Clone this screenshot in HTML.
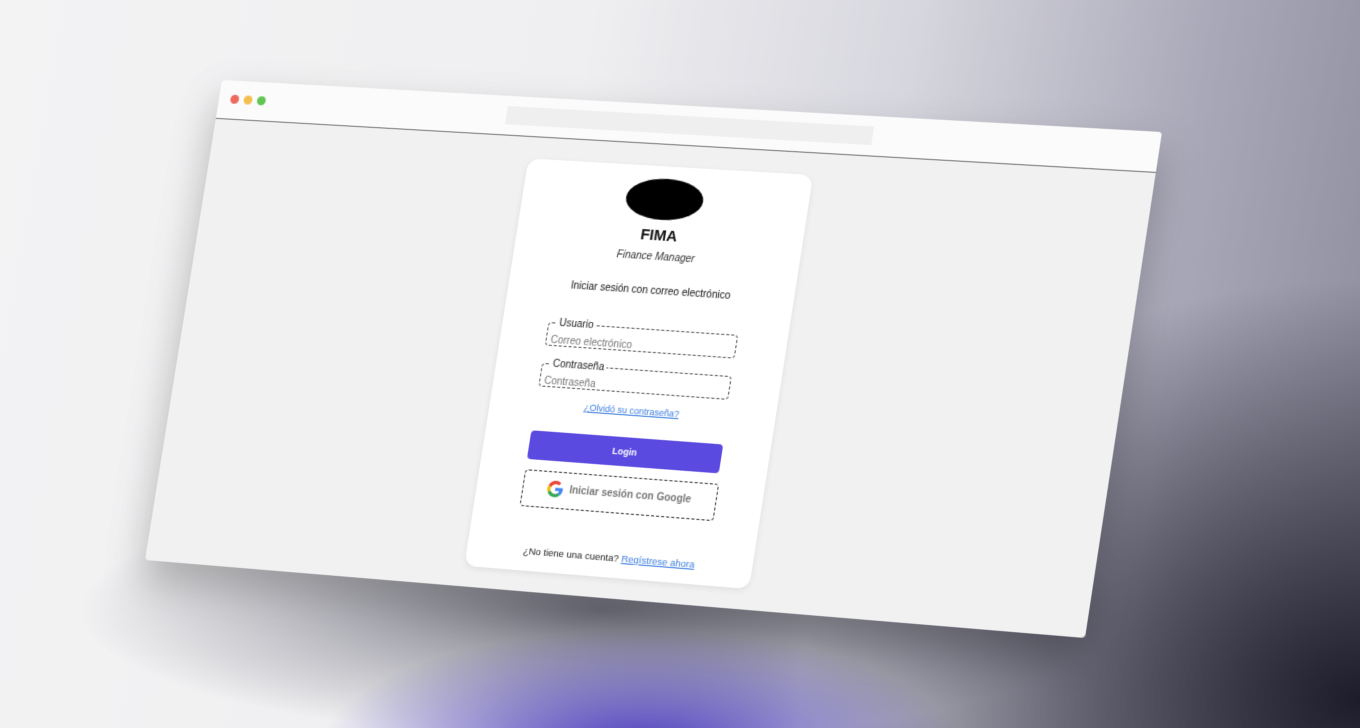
<!DOCTYPE html>
<html><head><meta charset="utf-8"><style>
html,body{margin:0;padding:0;width:1360px;height:728px;overflow:hidden;font-family:"Liberation Sans",sans-serif;}
body{background:
radial-gradient(ellipse 320px 120px at 640px 750px, rgba(72,56,190,1), rgba(72,56,190,0) 100%),
radial-gradient(ellipse 560px 420px at 1360px 700px, rgba(28,28,42,1), rgba(28,28,42,0) 100%),
radial-gradient(ellipse 520px 130px at 600px 610px, rgba(40,40,60,0.6), rgba(40,40,60,0) 100%),
linear-gradient(100deg,#f3f3f4 0%,#efeff1 40%,#d6d6de 62%,#a9a8b8 82%,#8a8a9a 100%);}
#win{position:absolute;left:0;top:0;width:940px;height:480px;transform-origin:0 0;
transform:matrix3d(0.93727,0.048194,0,-0.000053982,-0.16167,0.99515,0,-0.0000086596,0,0,1,0,222,80,0,1);
background:#f1f1f1;border-radius:4px;box-shadow:0 20px 40px rgba(0,0,0,0.25);}
#bar{position:absolute;left:0;top:0;width:940px;height:38px;background:#fbfbfb;border-bottom:1px solid #777;border-radius:4px 4px 0 0}
.dot{position:absolute;top:14px;width:9px;height:9px;border-radius:50%}
#addr{position:absolute;left:298px;top:10px;width:366px;height:18px;background:#efefef}
#card{position:absolute;left:327px;top:60px;width:285px;height:400px;background:#fff;border-radius:12px;box-shadow:0 2px 6px rgba(0,0,0,0.08)}
.c{position:absolute;left:0;width:285px;text-align:center}
fieldset{position:absolute;left:46px;width:180px;height:26px;border:1px dashed #555;border-radius:4px;margin:0;padding:0 4px;}
legend{font-size:10px;color:#222;padding:0 2px;margin-left:4px}
fieldset span{font-size:10px;color:#777;position:absolute;left:4px;top:6px}
</style></head><body>
<div id="win">
<div id="bar"><div class="dot" style="left:12px;background:#ec6a5e"></div><div class="dot" style="left:26px;background:#f4bf4f"></div><div class="dot" style="left:40px;background:#61c554"></div><div id="addr"></div></div>
<div id="card">
<div style="position:absolute;left:104px;top:12px;width:77px;height:40px;border-radius:50%;background:#000"></div>
<div class="c" style="top:59px;font-size:15px;font-weight:bold;color:#111">FIMA</div>
<div class="c" style="top:83px;font-size:10px;font-style:italic;color:#333">Finance Manager</div>
<div class="c" style="top:116px;font-size:10px;color:#111">Iniciar sesión con correo electrónico</div>
<fieldset style="top:153px"><legend>Usuario</legend><span>Correo electrónico</span></fieldset>
<fieldset style="top:193px"><legend>Contraseña</legend><span>Contraseña</span></fieldset>
<div class="c" style="top:233px;font-size:9px;color:#3b7de0;text-decoration:underline">¿Olvidó su contraseña?</div>
<div style="position:absolute;left:46px;top:264px;width:192px;height:28px;border-radius:4px;background:#5a4ae0;color:#fff;font-size:9px;font-weight:bold;text-align:center;line-height:28px">Login</div>
<div style="position:absolute;left:46px;top:302px;width:192px;height:34px;border:1px dashed #333;border-radius:4px;font-size:10px;font-weight:bold;color:#777;line-height:34px;text-align:center">
<svg width="16" height="16" viewBox="0 0 48 48" style="vertical-align:middle;margin-right:6px"><path fill="#EA4335" d="M24 9.5c3.5 0 6.6 1.2 9 3.5l6.7-6.7C35.6 2.4 30.2 0 24 0 14.6 0 6.6 5.4 2.7 13.2l7.8 6.1C12.4 13.7 17.7 9.5 24 9.5z"/><path fill="#4285F4" d="M46.9 24.5c0-1.6-.1-3.1-.4-4.5H24v9h12.9c-.6 3-2.3 5.5-4.8 7.2l7.6 5.9c4.4-4.1 7.2-10.1 7.2-17.6z"/><path fill="#FBBC05" d="M10.5 28.7c-.5-1.4-.8-3-.8-4.7s.3-3.2.8-4.7l-7.8-6.1C1 16.6 0 20.2 0 24s1 7.4 2.7 10.8l7.8-6.1z"/><path fill="#34A853" d="M24 48c6.5 0 11.9-2.1 15.9-5.8l-7.6-5.9c-2.1 1.4-4.9 2.3-8.3 2.3-6.3 0-11.6-4.2-13.5-9.9l-7.8 6.1C6.6 42.6 14.6 48 24 48z"/></svg>Iniciar sesión con Google</div>
<div class="c" style="top:376px;font-size:9.5px;color:#222">¿No tiene una cuenta? <span style="color:#3b7de0;text-decoration:underline">Regístrese ahora</span></div>
</div>
</div>
</body></html>
